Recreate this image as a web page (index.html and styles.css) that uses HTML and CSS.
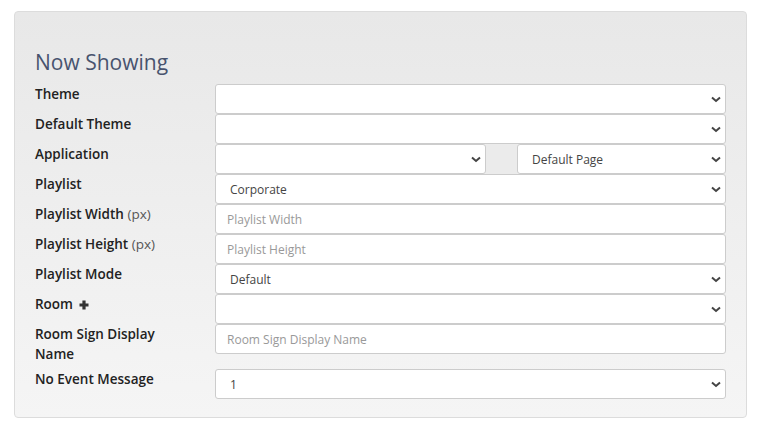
FILE: index.html
```html
<!DOCTYPE html>
<html lang="en">
<head>
    <meta charset="UTF-8">
    <meta name="viewport" content="width=device-width, initial-scale=1.0">
    <title>Now Showing</title>
    <link rel="stylesheet" href="styles.css">
</head>
<body>

    <div class="panel">
        <h2 class="panel-title">Now Showing</h2>

        <div class="form-row">
            <label>Theme</label>
            <div class="select-wrap">
                <select class="field"><option></option></select>
                <svg class="chevron" viewBox="0 0 10 7"><path d="M1 1.5 L5 5 L9 1.5" /></svg>
            </div>
        </div>

        <div class="form-row">
            <label>Default Theme</label>
            <div class="select-wrap">
                <select class="field"><option></option></select>
                <svg class="chevron" viewBox="0 0 10 7"><path d="M1 1.5 L5 5 L9 1.5" /></svg>
            </div>
        </div>

        <div class="form-row">
            <label>Application</label>
            <div class="input-group">
                <div class="select-wrap">
                    <select class="field"><option></option></select>
                    <svg class="chevron" viewBox="0 0 10 7"><path d="M1 1.5 L5 5 L9 1.5" /></svg>
                </div>
                <span class="addon"></span>
                <div class="select-wrap">
                    <select class="field"><option>Default Page</option></select>
                    <svg class="chevron" viewBox="0 0 10 7"><path d="M1 1.5 L5 5 L9 1.5" /></svg>
                </div>
            </div>
        </div>

        <div class="form-row">
            <label>Playlist</label>
            <div class="select-wrap">
                <select class="field"><option>Corporate</option></select>
                <svg class="chevron" viewBox="0 0 10 7"><path d="M1 1.5 L5 5 L9 1.5" /></svg>
            </div>
        </div>

        <div class="form-row">
            <label>Playlist Width <span class="unit">(px)</span></label>
            <input type="text" class="field text" placeholder="Playlist Width">
        </div>

        <div class="form-row">
            <label>Playlist Height <span class="unit">(px)</span></label>
            <input type="text" class="field text" placeholder="Playlist Height">
        </div>

        <div class="form-row">
            <label>Playlist Mode</label>
            <div class="select-wrap">
                <select class="field"><option>Default</option></select>
                <svg class="chevron" viewBox="0 0 10 7"><path d="M1 1.5 L5 5 L9 1.5" /></svg>
            </div>
        </div>

        <div class="form-row">
            <label>Room <svg class="plus" viewBox="0 0 10 10"><path d="M5 0.5 V9.5 M0.5 5 H9.5" /></svg></label>
            <div class="select-wrap">
                <select class="field"><option></option></select>
                <svg class="chevron" viewBox="0 0 10 7"><path d="M1 1.5 L5 5 L9 1.5" /></svg>
            </div>
        </div>

        <div class="form-row">
            <label>Room Sign Display Name</label>
            <input type="text" class="field text" placeholder="Room Sign Display Name">
        </div>

        <div class="form-row">
            <label>No Event Message</label>
            <div class="select-wrap">
                <select class="field"><option>1</option></select>
                <svg class="chevron" viewBox="0 0 10 7"><path d="M1 1.5 L5 5 L9 1.5" /></svg>
            </div>
        </div>
    </div>

</body>
</html>
```

FILE: styles.css
```css
body {
    margin: 0;
    padding: 11px 14px 0 14px;
    font-family: "Open Sans", Arial, sans-serif;
    background-color: #fff;
}

.panel {
    background: linear-gradient(to bottom, #e8e8e8, #f5f5f5);
    border: 1px solid #dcdcdc;
    border-radius: 4px;
    padding: 38px 20px 18px 20px;
    height: 349px;
}

.panel-title {
    margin: 0 0 10px 0;
    font-size: 21px;
    line-height: 24px;
    font-weight: 400;
    color: #48536e;
}

.form-row {
    display: grid;
    grid-template-columns: 180px 1fr;
}

.form-row label {
    max-width: 150px;
    font-size: 13.5px;
    line-height: 20px;
    font-weight: 600;
    color: #222;
    margin-bottom: 5px;
}

.unit {
    font-weight: 400;
    color: #555;
}

.plus {
    width: 10px;
    height: 10px;
    margin-left: 2px;
    vertical-align: -1px;
}

.plus path {
    stroke: #333;
    stroke-width: 3.2;
    fill: none;
}

.field {
    display: block;
    width: 100%;
    height: 30px;
    box-sizing: border-box;
    border: 1px solid #ccc;
    border-radius: 3px;
    background-color: #fff;
    font-family: "Open Sans", Arial, sans-serif;
    font-size: 12px;
    color: #444;
    padding: 0 30px 0 14px;
    margin: 0;
    appearance: none;
    -webkit-appearance: none;
    outline: none;
}

.field.text {
    padding: 0 11px;
}

.field.text::placeholder {
    color: #999;
}

.select-wrap {
    position: relative;
}

.chevron {
    position: absolute;
    right: 5px;
    top: 12px;
    width: 10px;
    height: 7px;
    pointer-events: none;
}

.chevron path {
    stroke: #444;
    stroke-width: 2;
    fill: none;
}

.input-group {
    display: grid;
    grid-template-columns: 271px 31px 1fr;
}

.addon {
    background-color: #ebebeb;
    height: 30px;
}
```
